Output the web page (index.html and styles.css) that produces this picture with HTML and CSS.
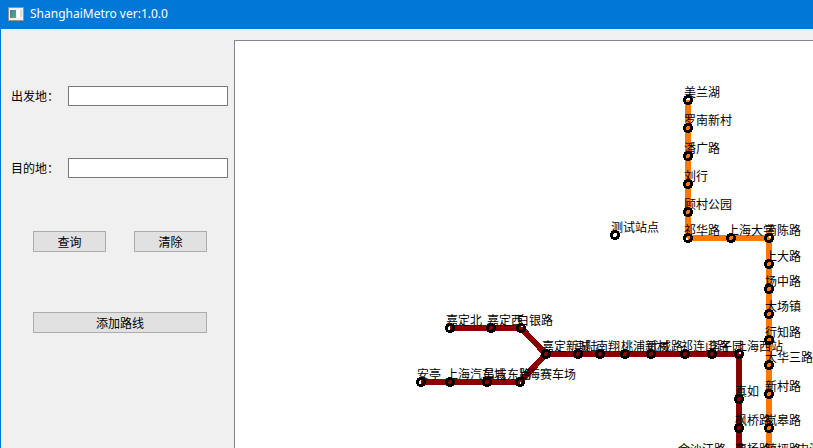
FILE: index.html
```html
<!DOCTYPE html>
<html lang="zh-CN">
<head>
<meta charset="utf-8">
<title>ShanghaiMetro ver:1.0.0</title>
<link rel="stylesheet" href="styles.css">
</head>
<body>
<header class="titlebar">
  <svg class="app-icon" width="16" height="14" viewBox="0 0 16 14" aria-hidden="true">
    <defs>
      <linearGradient id="screen" x1="0" y1="0" x2="1" y2="1">
        <stop offset="0" stop-color="#3f7fae"/>
        <stop offset="1" stop-color="#5fae6c"/>
      </linearGradient>
    </defs>
    <rect x="0" y="0" width="16" height="14" fill="#8a969e"/>
    <rect x="1" y="1" width="14" height="12" fill="#f0f0ee"/>
    <rect x="2" y="3" width="6" height="8" fill="url(#screen)"/>
    <rect x="9" y="3" width="3" height="8" fill="#fff"/>
    <rect x="12" y="3" width="2" height="7" fill="#d5dcd8"/>
  </svg>
  <h1 class="title">ShanghaiMetro ver:1.0.0</h1>
</header>
<main class="window">
  <form class="sidebar">
    <div class="field">
      <label for="from">出发地：</label>
      <input id="from" type="text">
    </div>
    <div class="field">
      <label for="to">目的地：</label>
      <input id="to" type="text">
    </div>
    <div class="actions">
      <button type="button">查询</button>
      <button type="button">清除</button>
      <button type="button" class="wide">添加路线</button>
    </div>
  </form>
  <section class="map">
    <svg class="network" role="img" aria-label="ShanghaiMetro">
      <g id="origin" transform="translate(-235 -41)">
        <g class="tracks" id="tracks"></g>
        <g class="nodes" id="nodes"></g>
        <g class="names" id="names"></g>
      </g>
    </svg>
  </section>
</main>
<script src="map.js"></script>
</body>
</html>
```
FILE: styles.css
```css
* {
  box-sizing: border-box;
}

body {
  display: flex;
  flex-direction: column;
  height: 100vh;
  margin: 0;
  overflow: hidden;
  background: #f0f0f0;
  color: #000;
  font: 12px/16px "Noto Sans CJK SC", sans-serif;
}

.titlebar {
  display: flex;
  flex: none;
  align-items: center;
  gap: 6px;
  height: 29px;
  padding: 0 8px 2px;
  background: #0078d7;
  color: #fff;
}

.title {
  margin: 0;
  font: 12px/16px "Noto Sans", sans-serif;
}

.window {
  display: flex;
  flex: 1;
  min-height: 0;
  border-left: 1px solid #0078d7;
}

.sidebar {
  flex: none;
  width: 233px;
  padding: 57px 6px 0 10px;
}

.field {
  display: flex;
  align-items: center;
  justify-content: space-between;
  margin-bottom: 52px;
}

.field input {
  width: 160px;
  height: 20px;
  padding: 0 3px;
  border: 1px solid #7a7a7a;
  background: #fff;
  font: inherit;
}

.actions {
  display: grid;
  grid-template-columns: 1fr 1fr;
  gap: 60px 28px;
  padding: 1px 21px 0 22px;
}

.actions button {
  height: 21px;
  padding: 0;
  border: 1px solid #adadad;
  background: #e1e1e1;
  color: #000;
  font: inherit;
}

.actions .wide {
  grid-column: 1 / -1;
}

.map {
  flex: 1;
  min-width: 0;
  margin-top: 11px;
  border: 1px solid #828790;
  border-width: 1px 0 0 1px;
  background: #fff;
  overflow: hidden;
}

.network {
  display: block;
  width: 100%;
  height: 100%;
}

.tracks {
  fill: none;
  stroke-width: 6px;
  shape-rendering: crispEdges;
}

.line7 {
  stroke: #ff7800;
}

.line11 {
  stroke: #8b0000;
}

.nodes {
  fill: none;
  stroke: #000;
  stroke-width: 3px;
  shape-rendering: crispEdges;
}
```
FILE: map.js
```js
const lines = [
  { name: "line11", stops: [[450, 328], [491, 328], [521, 328], [546, 354], [739, 354], [739, 457], [682, 457]] },
  { name: "line11", stops: [[421, 382], [520, 382], [546, 354]] },
  { name: "line7", stops: [[688, 100], [688, 238], [769, 238], [769, 457]] }
];

const stations = [
  ["美兰湖", 688, 100], ["罗南新村", 688, 128], ["潘广路", 688, 156],
  ["刘行", 688, 184], ["顾村公园", 688, 212], ["祁华路", 688, 238],
  ["上海大学", 731, 238], ["南陈路", 769, 238], ["上大路", 769, 264],
  ["场中路", 769, 289], ["大场镇", 769, 314], ["行知路", 769, 340],
  ["大华三路", 769, 365], ["新村路", 769, 394], ["岚皋路", 769, 428],
  ["镇坪路", 769, 457], ["中潭路", 801, 457],
  ["嘉定北", 450, 328], ["嘉定西", 491, 328], ["白银路", 521, 328],
  ["嘉定新城", 546, 354], ["马陆", 578, 354], ["南翔", 600, 354],
  ["桃浦新村", 625, 354], ["武威路", 651, 354], ["祁连山路", 685, 354],
  ["李子园", 712, 354], ["上海西站", 739, 354], ["真如", 739, 399],
  ["枫桥路", 739, 428], ["曹杨路", 739, 457], ["金沙江路", 682, 457],
  ["安亭", 421, 382], ["上海汽车城", 450, 382], ["昌吉东路", 487, 382],
  ["上海赛车场", 520, 382], ["测试站点", 615, 235]
];

function add(parentId, tag, attributes, text) {
  const node = document.createElementNS("http://www.w3.org/2000/svg", tag);
  for (const key in attributes) node.setAttribute(key, attributes[key]);
  if (text) node.textContent = text;
  document.getElementById(parentId).appendChild(node);
}

for (const { name, stops } of lines) {
  for (let i = 1; i < stops.length; i++) {
    const [x1, y1] = stops[i - 1];
    const [x2, y2] = stops[i];
    add("tracks", "line", { class: name, x1, y1, x2, y2 });
  }
}

for (const [name, x, y] of stations) {
  add("nodes", "circle", { cx: x, cy: y, r: 3.5 });
  add("names", "text", { x: x - 4, y: y - 3 }, name);
}
```
